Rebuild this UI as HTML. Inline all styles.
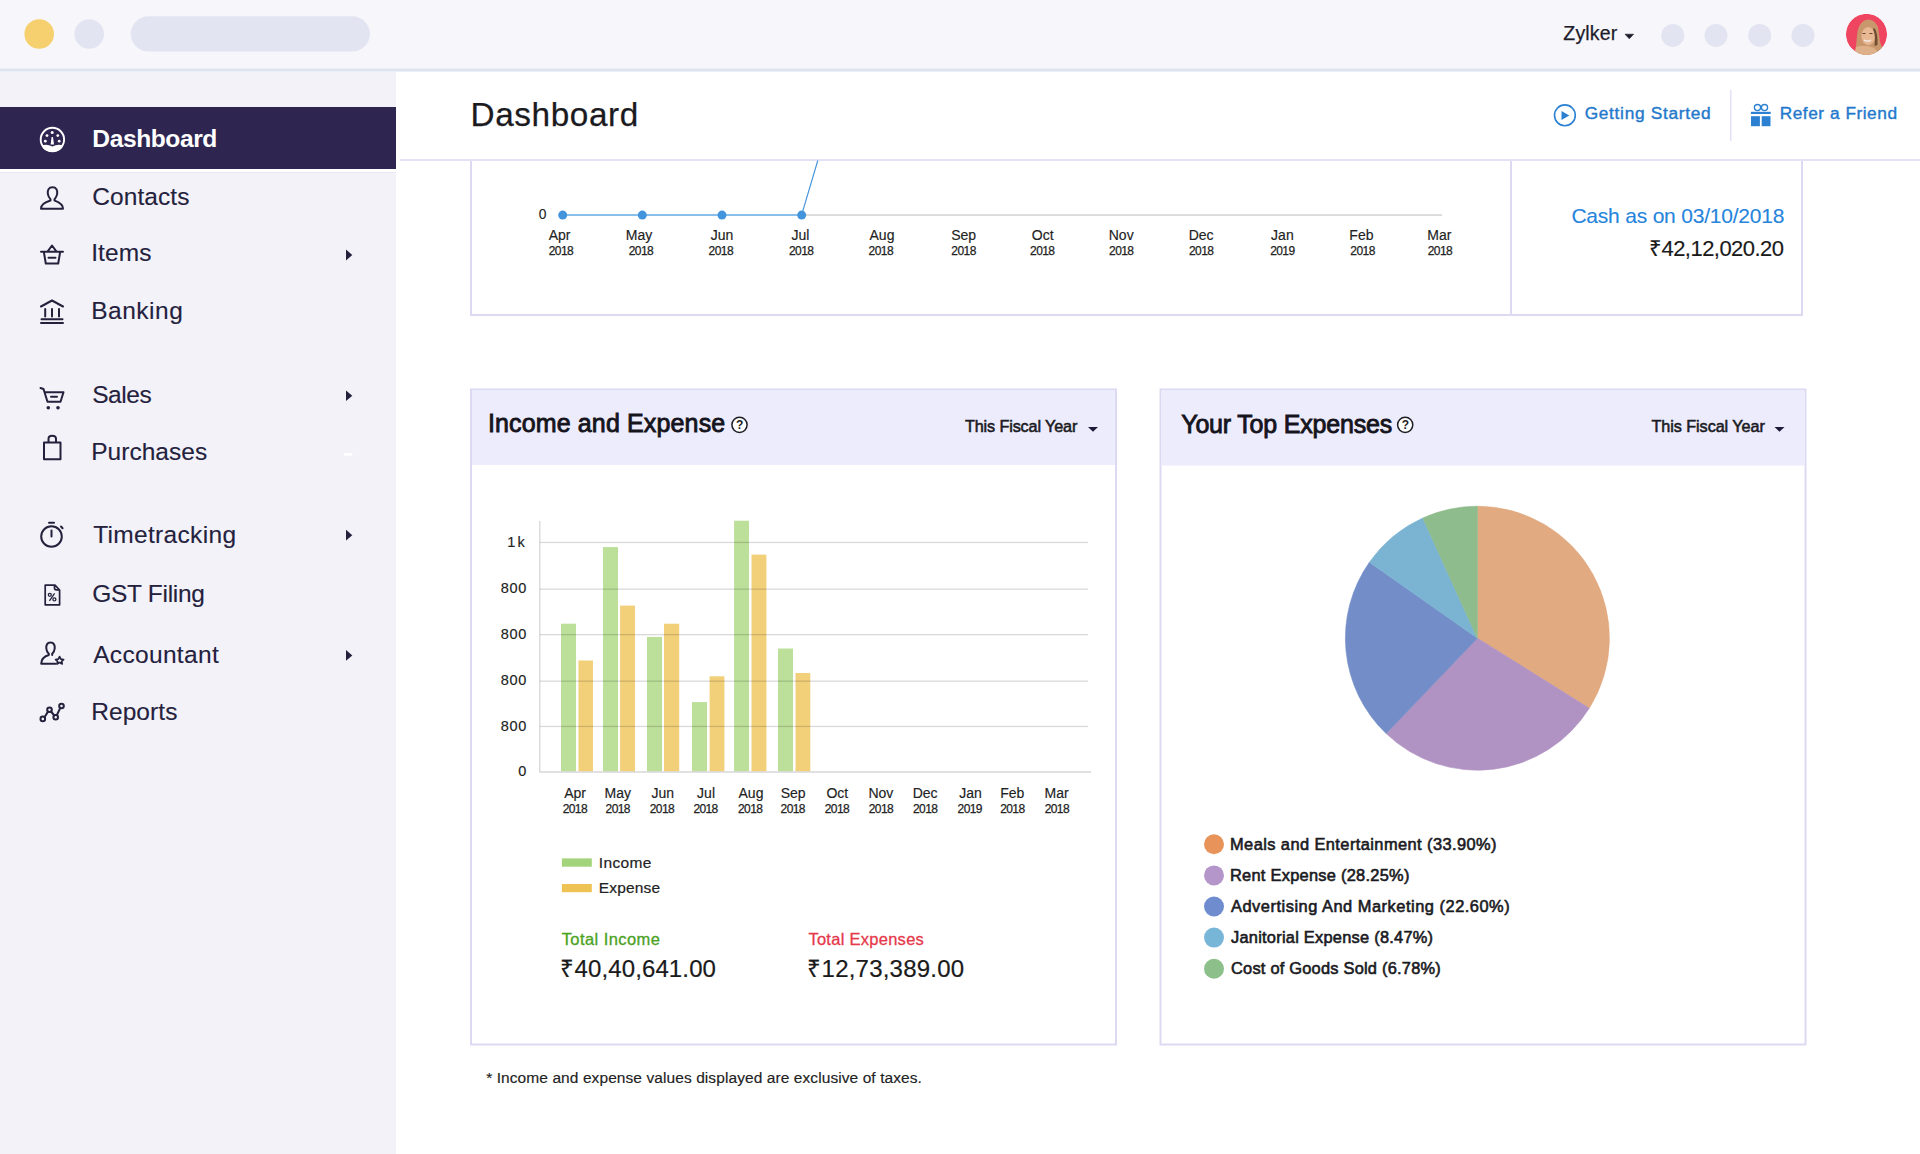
<!DOCTYPE html>
<html><head><meta charset="utf-8"><style>
html,body{margin:0;padding:0;width:1920px;height:1154px;overflow:hidden;background:#fff;}
.t{position:absolute;white-space:nowrap;line-height:1;font-family:"Liberation Sans",sans-serif;}
svg.bg{position:absolute;left:0;top:0;}
</style></head><body>
<svg class="bg" width="1920" height="1154" viewBox="0 0 1920 1154">
<defs>
<clipPath id="avc"><circle cx="1866.5" cy="34.3" r="20.6"/></clipPath>
</defs>
<!-- header -->
<rect x="0" y="0" width="1920" height="69" fill="#f7f7fb"/>
<rect x="0" y="68" width="1920" height="1" fill="#eceef6"/><rect x="0" y="69" width="1920" height="2" fill="#dfe3ef"/><rect x="0" y="71" width="1920" height="1" fill="#eceef8"/>
<circle cx="39.2" cy="34" r="14.8" fill="#f6cf6e"/>
<circle cx="89.2" cy="34" r="14.8" fill="#e2e5f1"/>
<rect x="130.7" y="16.3" width="239.3" height="35.2" rx="17.6" fill="#e2e5f1"/>
<path d="M1625 34.2 L1633.6 34.2 L1629.3 38.8 Z" fill="#1e1c2c" stroke="#1e1c2c" stroke-width="0.6" stroke-linejoin="round"/>
<circle cx="1672.8" cy="35.4" r="11.5" fill="#e2e5f1"/>
<circle cx="1716" cy="35.4" r="11.5" fill="#e2e5f1"/>
<circle cx="1759.7" cy="35.4" r="11.5" fill="#e2e5f1"/>
<circle cx="1803" cy="35.4" r="11.5" fill="#e2e5f1"/>
<g clip-path="url(#avc)">
<circle cx="1866.5" cy="34.3" r="20.6" fill="#ef4560"/>
<path d="M1855 56 L1857 36 Q1858 21 1868 19.5 Q1877 20 1878.5 30 L1880 42 Q1883 48 1884 56 Z" fill="#c8976b"/>
<ellipse cx="1868.2" cy="36" rx="6.8" ry="9" fill="#e8b894"/>
<path d="M1874.5 28 Q1878 33 1877.5 45 L1874.5 46 Q1876 36 1873 29 Z" fill="#6e4b33"/>
<path d="M1856 47 Q1866 44 1874 48 L1882 56 L1854 56 Z" fill="#ddb08a"/>
<path d="M1862.5 33.5 L1865.5 33.5" stroke="#6a4530" stroke-width="1.2"/>
<path d="M1869.5 33.5 L1872.5 33.5" stroke="#6a4530" stroke-width="1.2"/>
<path d="M1864 40 Q1867.5 42.5 1871 40" fill="none" stroke="#f4efe8" stroke-width="1.3"/>
</g>
<!-- sidebar -->
<rect x="0" y="72" width="396" height="1082" fill="#f3f2f9"/>
<rect x="0" y="107" width="396" height="62" fill="#2e2651"/><rect x="0" y="169" width="396" height="3" fill="#ffffff"/><rect x="0" y="172" width="396" height="1" fill="#e8e7ef"/>
<g fill="none" stroke="#24213d" stroke-width="2" stroke-linejoin="round" stroke-linecap="round">
  <!-- contacts -->
  <path d="M52.5 187.3 C48.5 187.3 47.5 190.5 47.8 193.5 C48 196.5 49.5 198 50.5 199.3 L50.5 200.5 C46 201.8 41 203.5 41 208.7 L63 208.7 C63 203.5 58 201.8 54.5 200.5 L54.5 199.3 C55.5 198 57 196.5 57.2 193.5 C57.5 190.5 56.5 187.3 52.5 187.3 Z"/>
  <!-- items basket -->
  <path d="M41 251.7 L63 251.7 M43.8 251.7 L45.8 263.5 L58.2 263.5 L60.2 251.7 M47.5 251.7 L52 245.5 L56.5 251.7 M48.5 257.8 L55.5 257.8"/>
  <!-- banking -->
  <path d="M41 306.5 L52 300.5 L63 306.5 M45.2 309 L45.2 316.5 M52 309 L52 316.5 M59 309 L59 316.5 M41.5 319.2 L62.5 319.2 M41 323 L63 323"/>
  <!-- sales cart -->
  <path d="M40.5 388 L43.5 389 L47.5 401.8 L60.5 401.8 L63.5 392.2 L45 392.2 M51 396.8 L57 396.8"/>
  <!-- purchases bag -->
  <path d="M44 442.5 L60.5 442.5 L60.5 459.3 L44 459.3 Z M48.5 442.5 L48.5 439 Q48.5 435.8 52.2 435.8 Q56 435.8 56 439 L56 442.5"/>
  <!-- timer -->
  <circle cx="51.5" cy="536.5" r="10.3"/>
  <path d="M49 522.8 L54 522.8 M51.5 530.5 L51.5 536.5 M61 526.5 L62.6 528.2"/>
  <!-- gst doc -->
  <path d="M45.2 585.2 L55 585.2 L59.6 590 L59.6 604.8 L45.2 604.8 Z M54.5 585.5 L54.5 588 Q54.5 589.8 56.5 589.8 L59.3 589.8" stroke-width="1.7"/>
  <!-- accountant -->
  <path d="M50.5 642.5 C47 642.5 46 645.5 46.3 648.5 C46.5 651 47.8 652.8 48.8 653.8 L48.8 655 C44.8 656.3 41.2 658.2 41.2 663.8 L55.5 663.8 M52.2 655 L52.2 653.8 C53.2 652.8 54.5 651 54.7 648.5 C55 645.5 54 642.5 50.5 642.5"/>
  <path d="M59.6 656.6 L60.9 659.2 L63.6 659.5 L61.6 661.3 L62.2 664 L59.6 662.6 L57 664 L57.6 661.3 L55.6 659.5 L58.3 659.2 Z" stroke-width="1.7"/>
  <!-- reports -->
  <path d="M44.5 717.2 L48 711.6 M51 711.5 L54.3 715.5 M56.9 715 L60.3 707.9"/>
  <circle cx="42.8" cy="718.9" r="2.3"/><circle cx="49.5" cy="709.8" r="2.3"/><circle cx="55.7" cy="717.2" r="2.3"/><circle cx="61.5" cy="706" r="2.3"/>
</g>
<g fill="#24213d">
  <circle cx="48.3" cy="407.8" r="1.8"/><circle cx="58" cy="407.8" r="1.8"/>
  <path d="M51.5 523 L51.5 526" />
  
  <path d="M346 249.6 L352.3 255.1 L346 260.6 Z"/>
  <path d="M346 390.5 L352.3 395.7 L346 401 Z"/>
  <path d="M346 529.8 L352.3 535.2 L346 540.6 Z"/>
  <path d="M346 650 L352.3 655.4 L346 660.8 Z"/>
</g>
<g fill="none" stroke="#24213d" stroke-width="1.3"><circle cx="49.8" cy="594.8" r="1.5"/><circle cx="54.4" cy="599.4" r="1.5"/><path d="M54.6 593.3 L49.4 600.9"/></g>
<rect x="344" y="453" width="8.2" height="2.7" fill="#ffffff"/>
<!-- dashboard icon -->
<g>
  <circle cx="52.4" cy="139.5" r="11.7" fill="none" stroke="#fff" stroke-width="1.9"/>
  <path d="M41.5 145.5 Q47 143.5 52.4 146.5 Q57.8 143.5 63.3 145.5 Q61 152 52.4 152 Q43.8 152 41.5 145.5 Z" fill="#fff"/>
  <circle cx="52.2" cy="132.5" r="1.5" fill="#fff"/><circle cx="47" cy="135.6" r="1.4" fill="#fff"/><circle cx="57.8" cy="135.6" r="1.4" fill="#fff"/>
  <circle cx="45.3" cy="141.2" r="1.4" fill="#fff"/><circle cx="59.2" cy="141.2" r="1.4" fill="#fff"/>
  <path d="M51.6 137 L53 137 L54 144.5 L50.6 144.5 Z" fill="#fff"/>
</g>
<!-- main -->
<rect x="396" y="72" width="1524" height="1082" fill="#ffffff"/>
<rect x="400" y="159" width="1520" height="2" fill="#e3e1f6"/>
<!-- getting started icon -->
<circle cx="1564.9" cy="115.3" r="10.4" fill="none" stroke="#2b80d1" stroke-width="1.6"/>
<path d="M1561.5 111 L1569.3 115.5 L1561.5 120 Z" fill="#2b80d1"/>
<rect x="1730" y="90" width="1.5" height="51" fill="#e3e1f6"/>
<g fill="#2b80d1">
  <circle cx="1757.5" cy="107.6" r="3.1" fill="none" stroke="#2b80d1" stroke-width="1.3"/>
  <circle cx="1764.5" cy="107.6" r="3.1" fill="none" stroke="#2b80d1" stroke-width="1.3"/>
  <rect x="1750.9" y="111.8" width="19.8" height="2.2"/>
  <rect x="1751" y="116.2" width="8.9" height="10"/>
  <rect x="1761.7" y="116.2" width="8.8" height="10"/>
</g>
<!-- line chart card -->
<rect x="470" y="161" width="2" height="155" fill="#dcd9f2"/>
<rect x="470" y="314" width="1333" height="2" fill="#dcd9f2"/>
<rect x="1510" y="161" width="2" height="155" fill="#dcd9f2"/>
<rect x="1801" y="161" width="2" height="155" fill="#dcd9f2"/>
<rect x="801" y="214.3" width="641" height="1.5" fill="#d2d2d2"/>
<path d="M562.5 215 L801.6 215" fill="none" stroke="#62abe4" stroke-width="1.7"/><path d="M801.6 215 L817.8 160.5" fill="none" stroke="#4393d8" stroke-width="1.1"/>
<g fill="#4294dc"><circle cx="562.7" cy="215.1" r="4.5"/><circle cx="642.3" cy="215.1" r="4.5"/><circle cx="722" cy="215.1" r="4.5"/><circle cx="801.7" cy="215.1" r="4.5"/></g>
<!-- income card -->
<rect x="471" y="389.5" width="645" height="655" fill="#ffffff" stroke="#dcd9f2" stroke-width="2"/>
<rect x="472" y="390.5" width="643" height="74.5" fill="#edecfc"/>
<circle cx="739.5" cy="424.8" r="7.6" fill="#fff" stroke="#1d1d24" stroke-width="1.5"/>
<path d="M1088 427 L1098 427 L1093 431.8 Z" fill="#1d1b3a"/>
<!-- expenses card -->
<rect x="1160.5" y="389.5" width="645" height="655" fill="#ffffff" stroke="#dcd9f2" stroke-width="2"/>
<rect x="1161.5" y="390.5" width="643" height="75" fill="#edecfc"/>
<circle cx="1405.2" cy="424.8" r="7.6" fill="#fff" stroke="#1d1d24" stroke-width="1.5"/>
<path d="M1774.5 427 L1784.5 427 L1779.5 431.8 Z" fill="#1d1b3a"/>
<rect x="539.2" y="521" width="1.2" height="251" fill="#d4d4d4"/>
<rect x="561" y="623.7" width="15.0" height="147.8" fill="#bcdf99"/>
<rect x="578.5" y="660.5" width="14.5" height="111.0" fill="#f2d07a"/>
<rect x="603" y="547.1" width="15.0" height="224.4" fill="#bcdf99"/>
<rect x="620.1" y="605.6" width="14.9" height="165.9" fill="#f2d07a"/>
<rect x="647" y="636.9" width="15.0" height="134.6" fill="#bcdf99"/>
<rect x="664" y="623.7" width="15.2" height="147.8" fill="#f2d07a"/>
<rect x="692" y="702.1" width="15.0" height="69.4" fill="#bcdf99"/>
<rect x="709.6" y="676.3" width="14.8" height="95.2" fill="#f2d07a"/>
<rect x="734.1" y="520.7" width="14.9" height="250.8" fill="#bcdf99"/>
<rect x="751.5" y="554.6" width="14.9" height="216.9" fill="#f2d07a"/>
<rect x="778" y="648.5" width="15.0" height="123.0" fill="#bcdf99"/>
<rect x="795.5" y="673" width="14.8" height="98.5" fill="#f2d07a"/>
<rect x="540" y="541.8" width="548" height="1.3" fill="#000" fill-opacity="0.15"/>
<rect x="540" y="588.5" width="548" height="1.3" fill="#000" fill-opacity="0.15"/>
<rect x="540" y="634.0" width="548" height="1.3" fill="#000" fill-opacity="0.15"/>
<rect x="540" y="680.5" width="548" height="1.3" fill="#000" fill-opacity="0.15"/>
<rect x="540" y="725.8" width="548" height="1.3" fill="#000" fill-opacity="0.15"/>
<rect x="539.2" y="771.3" width="552" height="1.4" fill="#d4d4d4"/>
<rect x="561.9" y="858.4" width="29.9" height="8.3" fill="#a3d47c"/>
<rect x="561.9" y="884" width="29.9" height="8.2" fill="#eec353"/>
<path d="M1477.4 638.2 L1477.40 506.20 A132 132 0 0 1 1589.29 708.23 Z" fill="#e1aa80" stroke="#e1aa80" stroke-width="0.6" stroke-linejoin="round"/>
<path d="M1477.4 638.2 L1589.29 708.23 A132 132 0 0 1 1386.14 733.57 Z" fill="#b093c3" stroke="#b093c3" stroke-width="0.6" stroke-linejoin="round"/>
<path d="M1477.4 638.2 L1386.14 733.57 A132 132 0 0 1 1369.40 562.30 Z" fill="#728dc7" stroke="#728dc7" stroke-width="0.6" stroke-linejoin="round"/>
<path d="M1477.4 638.2 L1369.40 562.30 A132 132 0 0 1 1422.85 518.00 Z" fill="#7bb3d2" stroke="#7bb3d2" stroke-width="0.6" stroke-linejoin="round"/>
<path d="M1477.4 638.2 L1422.85 518.00 A132 132 0 0 1 1477.40 506.20 Z" fill="#8fbc8c" stroke="#8fbc8c" stroke-width="0.6" stroke-linejoin="round"/>
<circle cx="1214" cy="844.3" r="10" fill="#e8935a"/>
<circle cx="1214" cy="875.4" r="10" fill="#b596ca"/>
<circle cx="1214" cy="906.5" r="10" fill="#6f8ccf"/>
<circle cx="1214" cy="937.6" r="10" fill="#78b6d8"/>
<circle cx="1214" cy="968.7" r="10" fill="#8dbf8a"/>
</svg>

<div class="t" style="left:1563.30px;top:24.09px;font-size:19.5px;color:#1e1c2c;letter-spacing:0.182px;-webkit-text-stroke:0.25px #1e1c2c;">Zylker</div>
<div class="t" style="left:92.30px;top:127.17px;font-size:24.6px;color:#ffffff;font-weight:700;letter-spacing:-0.429px;">Dashboard</div>
<div class="t" style="left:92.20px;top:184.56px;font-size:24.5px;color:#24213d;letter-spacing:0.081px;-webkit-text-stroke:0.12px #24213d;">Contacts</div>
<div class="t" style="left:91.20px;top:241.16px;font-size:24.5px;color:#24213d;letter-spacing:0.088px;-webkit-text-stroke:0.12px #24213d;">Items</div>
<div class="t" style="left:91.20px;top:298.86px;font-size:24.5px;color:#24213d;letter-spacing:0.515px;-webkit-text-stroke:0.12px #24213d;">Banking</div>
<div class="t" style="left:92.20px;top:382.66px;font-size:24.5px;color:#24213d;letter-spacing:-0.409px;-webkit-text-stroke:0.12px #24213d;">Sales</div>
<div class="t" style="left:91.20px;top:439.86px;font-size:24.5px;color:#24213d;letter-spacing:0.037px;-webkit-text-stroke:0.12px #24213d;">Purchases</div>
<div class="t" style="left:93.20px;top:522.76px;font-size:24.5px;color:#24213d;letter-spacing:0.319px;-webkit-text-stroke:0.12px #24213d;">Timetracking</div>
<div class="t" style="left:92.20px;top:582.16px;font-size:24.5px;color:#24213d;letter-spacing:-0.277px;-webkit-text-stroke:0.12px #24213d;">GST Filing</div>
<div class="t" style="left:93.20px;top:642.86px;font-size:24.5px;color:#24213d;letter-spacing:0.325px;-webkit-text-stroke:0.12px #24213d;">Accountant</div>
<div class="t" style="left:91.20px;top:699.86px;font-size:24.5px;color:#24213d;letter-spacing:0.077px;-webkit-text-stroke:0.12px #24213d;">Reports</div>
<div class="t" style="left:470.50px;top:98.10px;font-size:33.3px;color:#1b1b1f;letter-spacing:0.603px;-webkit-text-stroke:0.25px #1b1b1f;">Dashboard</div>
<div class="t" style="left:1584.70px;top:105.25px;font-size:17.3px;color:#2479cc;letter-spacing:0.691px;-webkit-text-stroke:0.4px #2479cc;">Getting Started</div>
<div class="t" style="left:1779.70px;top:105.25px;font-size:17.3px;color:#2479cc;letter-spacing:0.527px;-webkit-text-stroke:0.4px #2479cc;">Refer a Friend</div>
<div class="t" style="left:538.80px;top:208.32px;font-size:13.8px;color:#222;letter-spacing:-0.500px;-webkit-text-stroke:0.1px #222;">0</div>
<div class="t" style="left:548.64px;top:228.45px;font-size:14px;color:#222;-webkit-text-stroke:0.15px #222;">Apr</div>
<div class="t" style="left:548.75px;top:245.24px;font-size:12px;color:#222;letter-spacing:-0.574px;-webkit-text-stroke:0.25px #222;">2018</div>
<div class="t" style="left:625.78px;top:228.45px;font-size:14px;color:#222;-webkit-text-stroke:0.15px #222;">May</div>
<div class="t" style="left:628.75px;top:245.24px;font-size:12px;color:#222;letter-spacing:-0.574px;-webkit-text-stroke:0.25px #222;">2018</div>
<div class="t" style="left:710.71px;top:228.45px;font-size:14px;color:#222;-webkit-text-stroke:0.15px #222;">Jun</div>
<div class="t" style="left:708.60px;top:245.24px;font-size:12px;color:#222;letter-spacing:-0.574px;-webkit-text-stroke:0.25px #222;">2018</div>
<div class="t" style="left:791.41px;top:228.45px;font-size:14px;color:#222;-webkit-text-stroke:0.15px #222;">Jul</div>
<div class="t" style="left:788.95px;top:245.24px;font-size:12px;color:#222;letter-spacing:-0.574px;-webkit-text-stroke:0.25px #222;">2018</div>
<div class="t" style="left:869.54px;top:228.45px;font-size:14px;color:#222;-webkit-text-stroke:0.15px #222;">Aug</div>
<div class="t" style="left:868.60px;top:245.24px;font-size:12px;color:#222;letter-spacing:-0.574px;-webkit-text-stroke:0.25px #222;">2018</div>
<div class="t" style="left:951.19px;top:228.45px;font-size:14px;color:#222;-webkit-text-stroke:0.15px #222;">Sep</div>
<div class="t" style="left:951.35px;top:245.24px;font-size:12px;color:#222;letter-spacing:-0.574px;-webkit-text-stroke:0.25px #222;">2018</div>
<div class="t" style="left:1031.76px;top:228.45px;font-size:14px;color:#222;-webkit-text-stroke:0.15px #222;">Oct</div>
<div class="t" style="left:1030.05px;top:245.24px;font-size:12px;color:#222;letter-spacing:-0.574px;-webkit-text-stroke:0.25px #222;">2018</div>
<div class="t" style="left:1108.75px;top:228.45px;font-size:14px;color:#222;-webkit-text-stroke:0.15px #222;">Nov</div>
<div class="t" style="left:1109.05px;top:245.24px;font-size:12px;color:#222;letter-spacing:-0.574px;-webkit-text-stroke:0.25px #222;">2018</div>
<div class="t" style="left:1188.65px;top:228.45px;font-size:14px;color:#222;-webkit-text-stroke:0.15px #222;">Dec</div>
<div class="t" style="left:1188.95px;top:245.24px;font-size:12px;color:#222;letter-spacing:-0.574px;-webkit-text-stroke:0.25px #222;">2018</div>
<div class="t" style="left:1271.11px;top:228.45px;font-size:14px;color:#222;-webkit-text-stroke:0.15px #222;">Jan</div>
<div class="t" style="left:1270.15px;top:245.24px;font-size:12px;color:#222;letter-spacing:-0.574px;-webkit-text-stroke:0.25px #222;">2019</div>
<div class="t" style="left:1349.33px;top:228.45px;font-size:14px;color:#222;-webkit-text-stroke:0.15px #222;">Feb</div>
<div class="t" style="left:1350.35px;top:245.24px;font-size:12px;color:#222;letter-spacing:-0.574px;-webkit-text-stroke:0.25px #222;">2018</div>
<div class="t" style="left:1427.28px;top:228.45px;font-size:14px;color:#222;-webkit-text-stroke:0.15px #222;">Mar</div>
<div class="t" style="left:1427.75px;top:245.24px;font-size:12px;color:#222;letter-spacing:-0.574px;-webkit-text-stroke:0.25px #222;">2018</div>
<div class="t" style="left:1571.40px;top:205.12px;font-size:21px;color:#2584dc;letter-spacing:-0.204px;-webkit-text-stroke:0.1px #2584dc;">Cash as on 03/10/2018</div>
<div class="t" style="left:1649.00px;top:237.57px;font-size:22px;color:#1a1a1a;letter-spacing:-0.535px;-webkit-text-stroke:0.15px #1a1a1a;">₹42,12,020.20</div>
<div class="t" style="left:487.90px;top:411.03px;font-size:25px;color:#15141c;letter-spacing:0.143px;-webkit-text-stroke:0.85px #15141c;">Income and Expense</div>
<div class="t" style="left:964.90px;top:417.88px;font-size:16.2px;color:#1a1a22;letter-spacing:-0.117px;-webkit-text-stroke:0.55px #1a1a22;">This Fiscal Year</div>
<div class="t" style="left:1181.20px;top:411.63px;font-size:25px;color:#15141c;letter-spacing:-0.188px;-webkit-text-stroke:0.85px #15141c;">Your Top Expenses</div>
<div class="t" style="left:1651.50px;top:417.88px;font-size:16.2px;color:#1a1a22;letter-spacing:-0.064px;-webkit-text-stroke:0.55px #1a1a22;">This Fiscal Year</div>
<div class="t" style="left:507.30px;top:534.52px;font-size:14.5px;color:#222;letter-spacing:-2.800px;-webkit-text-stroke:0.15px #222;">1</div>
<div class="t" style="left:517.60px;top:534.52px;font-size:14.5px;color:#222;letter-spacing:-1.300px;-webkit-text-stroke:0.15px #222;">k</div>
<div class="t" style="left:500.70px;top:581.22px;font-size:14.5px;color:#222;letter-spacing:0.686px;-webkit-text-stroke:0.15px #222;">800</div>
<div class="t" style="left:500.70px;top:626.82px;font-size:14.5px;color:#222;letter-spacing:0.686px;-webkit-text-stroke:0.15px #222;">800</div>
<div class="t" style="left:500.70px;top:673.22px;font-size:14.5px;color:#222;letter-spacing:0.686px;-webkit-text-stroke:0.15px #222;">800</div>
<div class="t" style="left:500.70px;top:718.62px;font-size:14.5px;color:#222;letter-spacing:0.686px;-webkit-text-stroke:0.15px #222;">800</div>
<div class="t" style="left:518.20px;top:763.92px;font-size:14.5px;color:#222;-webkit-text-stroke:0.15px #222;">0</div>
<div class="t" style="left:564.24px;top:785.95px;font-size:14px;color:#222;-webkit-text-stroke:0.15px #222;">Apr</div>
<div class="t" style="left:562.70px;top:802.74px;font-size:12px;color:#222;letter-spacing:-0.607px;-webkit-text-stroke:0.25px #222;">2018</div>
<div class="t" style="left:604.48px;top:785.95px;font-size:14px;color:#222;-webkit-text-stroke:0.15px #222;">May</div>
<div class="t" style="left:605.60px;top:802.74px;font-size:12px;color:#222;letter-spacing:-0.607px;-webkit-text-stroke:0.25px #222;">2018</div>
<div class="t" style="left:651.51px;top:785.95px;font-size:14px;color:#222;-webkit-text-stroke:0.15px #222;">Jun</div>
<div class="t" style="left:649.80px;top:802.74px;font-size:12px;color:#222;letter-spacing:-0.607px;-webkit-text-stroke:0.25px #222;">2018</div>
<div class="t" style="left:697.11px;top:785.95px;font-size:14px;color:#222;-webkit-text-stroke:0.15px #222;">Jul</div>
<div class="t" style="left:693.40px;top:802.74px;font-size:12px;color:#222;letter-spacing:-0.607px;-webkit-text-stroke:0.25px #222;">2018</div>
<div class="t" style="left:738.54px;top:785.95px;font-size:14px;color:#222;-webkit-text-stroke:0.15px #222;">Aug</div>
<div class="t" style="left:738.00px;top:802.74px;font-size:12px;color:#222;letter-spacing:-0.607px;-webkit-text-stroke:0.25px #222;">2018</div>
<div class="t" style="left:780.64px;top:785.95px;font-size:14px;color:#222;-webkit-text-stroke:0.15px #222;">Sep</div>
<div class="t" style="left:780.60px;top:802.74px;font-size:12px;color:#222;letter-spacing:-0.607px;-webkit-text-stroke:0.25px #222;">2018</div>
<div class="t" style="left:826.46px;top:785.95px;font-size:14px;color:#222;-webkit-text-stroke:0.15px #222;">Oct</div>
<div class="t" style="left:824.80px;top:802.74px;font-size:12px;color:#222;letter-spacing:-0.607px;-webkit-text-stroke:0.25px #222;">2018</div>
<div class="t" style="left:868.45px;top:785.95px;font-size:14px;color:#222;-webkit-text-stroke:0.15px #222;">Nov</div>
<div class="t" style="left:868.80px;top:802.74px;font-size:12px;color:#222;letter-spacing:-0.607px;-webkit-text-stroke:0.25px #222;">2018</div>
<div class="t" style="left:912.65px;top:785.95px;font-size:14px;color:#222;-webkit-text-stroke:0.15px #222;">Dec</div>
<div class="t" style="left:913.00px;top:802.74px;font-size:12px;color:#222;letter-spacing:-0.607px;-webkit-text-stroke:0.25px #222;">2018</div>
<div class="t" style="left:959.31px;top:785.95px;font-size:14px;color:#222;-webkit-text-stroke:0.15px #222;">Jan</div>
<div class="t" style="left:957.60px;top:802.74px;font-size:12px;color:#222;letter-spacing:-0.607px;-webkit-text-stroke:0.25px #222;">2019</div>
<div class="t" style="left:1000.13px;top:785.95px;font-size:14px;color:#222;-webkit-text-stroke:0.15px #222;">Feb</div>
<div class="t" style="left:1000.20px;top:802.74px;font-size:12px;color:#222;letter-spacing:-0.607px;-webkit-text-stroke:0.25px #222;">2018</div>
<div class="t" style="left:1044.58px;top:785.95px;font-size:14px;color:#222;-webkit-text-stroke:0.15px #222;">Mar</div>
<div class="t" style="left:1044.70px;top:802.74px;font-size:12px;color:#222;letter-spacing:-0.607px;-webkit-text-stroke:0.25px #222;">2018</div>
<div class="t" style="left:598.80px;top:854.88px;font-size:15.5px;color:#222;letter-spacing:0.358px;-webkit-text-stroke:0.2px #222;">Income</div>
<div class="t" style="left:598.80px;top:880.48px;font-size:15.5px;color:#222;letter-spacing:0.150px;-webkit-text-stroke:0.2px #222;">Expense</div>
<div class="t" style="left:561.70px;top:930.53px;font-size:16.5px;color:#4aa21e;letter-spacing:0.421px;-webkit-text-stroke:0.3px #4aa21e;">Total Income</div>
<div class="t" style="left:560.40px;top:957.18px;font-size:24px;color:#1a1a1a;letter-spacing:0.118px;-webkit-text-stroke:0.2px #1a1a1a;">₹40,40,641.00</div>
<div class="t" style="left:808.40px;top:930.53px;font-size:16.5px;color:#e5384a;letter-spacing:0.273px;-webkit-text-stroke:0.3px #e5384a;">Total Expenses</div>
<div class="t" style="left:807.40px;top:957.18px;font-size:24px;color:#1a1a1a;letter-spacing:0.210px;-webkit-text-stroke:0.2px #1a1a1a;">₹12,73,389.00</div>
<div class="t" style="left:486.20px;top:1070.38px;font-size:15.5px;color:#222;letter-spacing:0.082px;-webkit-text-stroke:0.15px #222;">* Income and expense values displayed are exclusive of taxes.</div>
<div class="t" style="left:1230.00px;top:836.21px;font-size:16.4px;color:#1a1a22;letter-spacing:0.428px;-webkit-text-stroke:0.6px #1a1a22;">Meals and Entertainment (33.90%)</div>
<div class="t" style="left:1230.00px;top:867.21px;font-size:16.4px;color:#1a1a22;letter-spacing:0.267px;-webkit-text-stroke:0.6px #1a1a22;">Rent Expense (28.25%)</div>
<div class="t" style="left:1231.00px;top:898.21px;font-size:16.4px;color:#1a1a22;letter-spacing:0.521px;-webkit-text-stroke:0.6px #1a1a22;">Advertising And Marketing (22.60%)</div>
<div class="t" style="left:1231.00px;top:929.21px;font-size:16.4px;color:#1a1a22;letter-spacing:0.247px;-webkit-text-stroke:0.6px #1a1a22;">Janitorial Expense (8.47%)</div>
<div class="t" style="left:1231.00px;top:960.21px;font-size:16.4px;color:#1a1a22;letter-spacing:0.227px;-webkit-text-stroke:0.6px #1a1a22;">Cost of Goods Sold (6.78%)</div>
<div class="t" style="left:736.00px;top:419.14px;font-size:12px;color:#1d1d24;font-weight:700;">?</div>
<div class="t" style="left:1401.70px;top:419.14px;font-size:12px;color:#1d1d24;font-weight:700;">?</div>
</body></html>
